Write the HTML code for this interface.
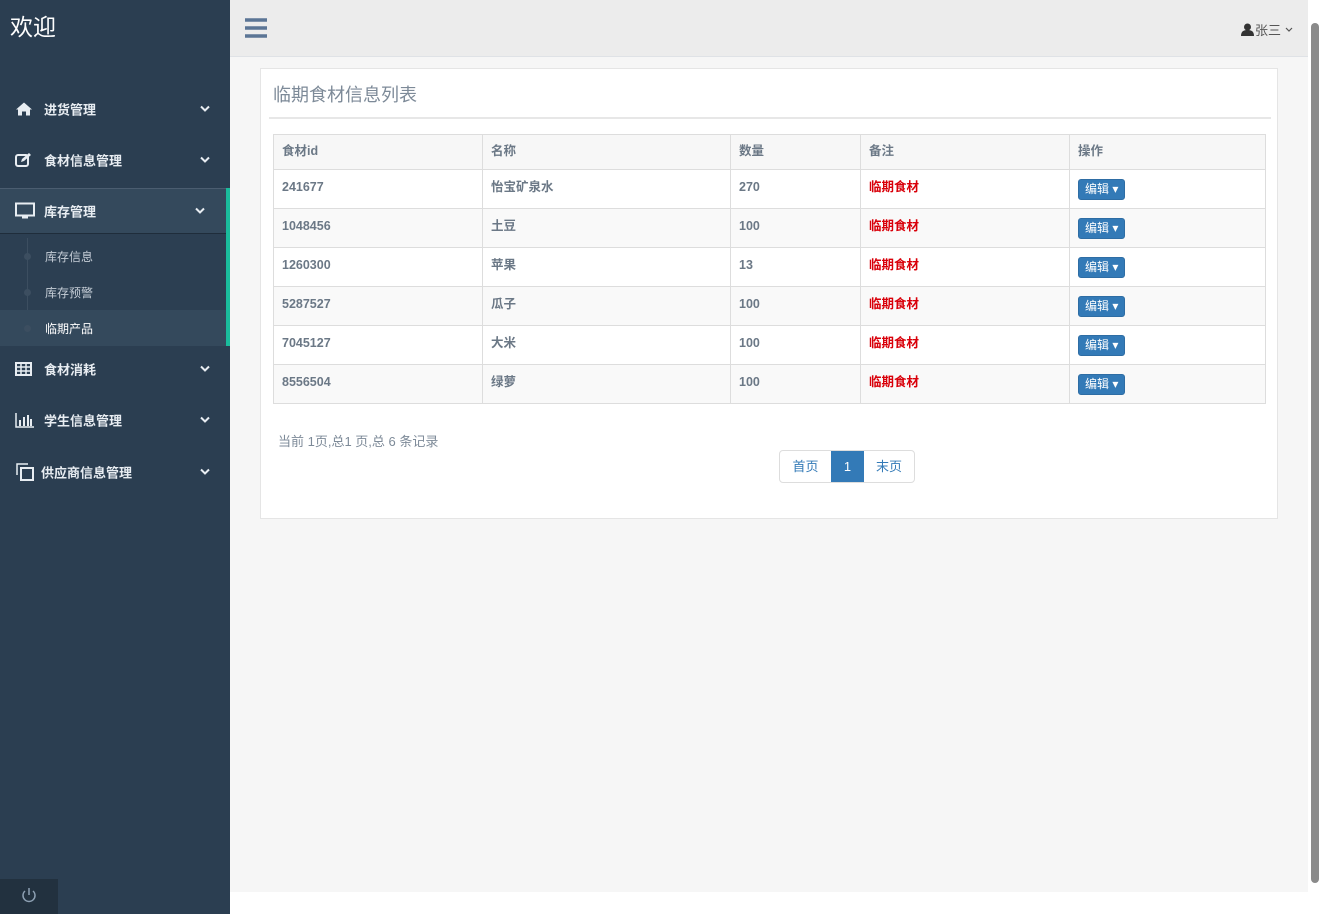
<!DOCTYPE html>
<html><head><meta charset="utf-8"><style>
*{box-sizing:border-box;margin:0;padding:0}
body{width:1323px;height:914px;overflow:hidden;font-family:"Liberation Sans","Noto Sans CJK SC",sans-serif;background:#f6f6f6;position:relative;font-size:13px}
.side{position:absolute;left:0;top:0;width:230px;height:914px;background:#2b3e51;color:#e8edf2}
.logo{position:absolute;left:10px;top:11px;font-size:23px;color:#fff;line-height:32px}
.item{position:absolute;left:0;width:230px;height:50px;font-size:13px;font-weight:bold}
.item .ic{position:absolute;left:15px;top:50%;transform:translateY(-50%)}
.item .t{position:absolute;left:44px;top:50%;transform:translateY(-50%)}
.item .ch{position:absolute;right:20px;top:50%;transform:translateY(-50%)}
.sub{position:absolute;left:0;width:226px;height:36px;font-size:12px;color:#c5cdd6}
.sub span{position:absolute;left:45px;top:10px}
.dot{position:absolute;left:24px;top:15px;width:7px;height:7px;border-radius:50%;background:#3c4e60}
.top{position:absolute;left:230px;top:0;width:1078px;height:57px;background:#ececec;border-bottom:1px solid #dfe2e6}
.panel{position:absolute;left:260px;top:68px;width:1018px;height:451px;background:#fff;border:1px solid #e5e5e5}
table{position:absolute;left:12px;top:65px;border-collapse:collapse;width:993px;color:#6b7886;font-weight:bold;font-size:12.5px}
td{border:1px solid #ddd;height:39px;padding:0 8px;vertical-align:top;padding-top:9px;line-height:16px}
tr.h td{height:35px;background:#f7f7f7;padding-top:8px}
tr.g td{background:#f9f9f9}
.red{color:#d9000a}
.btn{display:inline-block;background:#337ab7;color:#fff;font-size:12px;padding:1px 6px;border-radius:3px;border:1px solid #2e6da4;font-weight:normal;line-height:17px}
.pg{position:absolute;top:381px;left:518px;display:flex;border:1px solid #ddd;border-radius:4px;height:33px;font-size:13px;color:#337ab7}
.pg div{width:41px;line-height:31px;text-align:center}
</style></head><body>
<svg width="0" height="0" style="position:absolute"><defs><symbol id="chv" viewBox="0 0 10 7"><path d="M1 1l4 4 4-4" fill="none" stroke="#e8edf2" stroke-width="2"/></symbol></defs></svg>
<div class="side">
<div class="logo">欢迎</div>
<div class="item" style="top:84px"><svg class="ic" width="18" height="15" viewBox="0 0 18 15"><path d="M9 1L1 8h2v6h4v-4h4v4h4V8h2z" fill="#e8edf2"/></svg><span class="t">进货管理</span><svg class="ch" width="10" height="7"><use href="#chv"/></svg></div>
<div class="item" style="top:135px"><svg class="ic" width="18" height="16"><rect x="1" y="3" width="12" height="11" fill="none" stroke="#e8edf2" stroke-width="2" rx="2"/><path d="M6 10l1-3 7-6 2 2-7 6z" fill="#e8edf2"/></svg><span class="t">食材信息管理</span><svg class="ch" width="10" height="7"><use href="#chv"/></svg></div>
<div style="position:absolute;left:0;top:188px;width:230px;height:158px;background:#2c3f52"></div>
<div style="position:absolute;left:0;top:188px;width:226px;height:46px;background:#34495c;border-top:1px solid #4b5d70;border-bottom:1px solid #1f2d3b"></div>
<div style="position:absolute;left:226px;top:188px;width:4px;height:158px;background:#1abc9c"></div>
<div class="item" style="top:186px"><svg class="ic" width="20" height="17"><rect x="1" y="1" width="18" height="12" fill="none" stroke="#e8edf2" stroke-width="2"/><rect x="7" y="13" width="6" height="3" fill="#e8edf2"/></svg><span class="t">库存管理</span><svg class="ch" width="10" height="7" style="right:25px"><use href="#chv"/></svg></div>
<div style="position:absolute;left:27px;top:238px;width:1px;height:108px;background:#3c4e60"></div>
<div class="sub" style="top:238px"><i class="dot"></i><span>库存信息</span></div>
<div class="sub" style="top:274px"><i class="dot"></i><span>库存预警</span></div>
<div class="sub" style="top:310px;background:#34495c;color:#fff"><i class="dot"></i><span>临期产品</span></div>
<div class="item" style="top:344px"><svg class="ic" width="17" height="14"><rect x="1" y="1" width="15" height="12" fill="none" stroke="#e8edf2" stroke-width="2"/><path d="M1 5h15M1 9h15M6 1v12M11 1v12" stroke="#e8edf2" stroke-width="1.5"/></svg><span class="t">食材消耗</span><svg class="ch" width="10" height="7"><use href="#chv"/></svg></div>
<div class="item" style="top:395px"><svg class="ic" width="20" height="16"><path d="M1 1v14h18" stroke="#e8edf2" stroke-width="1.5" fill="none"/><rect x="4" y="8" width="2" height="6" fill="#e8edf2"/><rect x="8" y="5" width="2" height="9" fill="#e8edf2"/><rect x="12" y="3" width="2" height="11" fill="#e8edf2"/><rect x="15" y="7" width="2" height="7" fill="#e8edf2"/></svg><span class="t">学生信息管理</span><svg class="ch" width="10" height="7"><use href="#chv"/></svg></div>
<div class="item" style="top:447px"><svg class="ic" width="20" height="20"><path d="M2 13V2h11" fill="none" stroke="#e8edf2" stroke-width="1.5"/><rect x="6" y="6" width="12" height="12" fill="none" stroke="#e8edf2" stroke-width="2"/></svg><span class="t" style="left:41px">供应商信息管理</span><svg class="ch" width="10" height="7"><use href="#chv"/></svg></div>
<div style="position:absolute;left:0;top:879px;width:58px;height:35px;background:#22313f;text-align:center;padding-top:7px"><svg width="18" height="18"><path d="M5 5a6 6 0 1 0 8 0M9 2v7" fill="none" stroke="#8da0b3" stroke-width="1.5"/></svg></div>
</div>
<div class="top">
<svg style="position:absolute;left:15px;top:18px" width="22" height="20"><path d="M0 2h22M0 10h22M0 18h22" stroke="#5b7595" stroke-width="3.5"/></svg>
<div style="position:absolute;right:15px;top:20px;font-size:13px;color:#555;display:flex;align-items:center;gap:1px"><svg width="13" height="13"><circle cx="6.5" cy="4" r="3.5" fill="#333"/><path d="M0 13c0-5 3-6 6.5-6s6.5 1 6.5 6z" fill="#333"/></svg><span>张三</span><svg width="8" height="6" style="margin-left:3px"><path d="M1 1l3 3 3-3" fill="none" stroke="#555" stroke-width="1.2"/></svg></div>
</div>
<div style="position:absolute;left:230px;top:892px;width:1078px;height:22px;background:#fff"></div>
<div style="position:absolute;left:1308px;top:0;width:15px;height:914px;background:#fff"><div style="position:absolute;left:3px;top:23px;width:8px;height:860px;background:#8a8a8a;border-radius:4px"></div></div>
<div class="panel">
<div style="position:absolute;left:12px;top:12px;font-size:18px;color:#7d8a98">临期食材信息列表</div>
<div style="position:absolute;left:8px;top:48px;width:1002px;height:2px;background:#e7e7e7"></div>
<table>
<colgroup><col style="width:209px"><col style="width:248px"><col style="width:130px"><col style="width:209px"><col></colgroup>
<tr class="h"><td>食材id</td><td>名称</td><td>数量</td><td>备注</td><td>操作</td></tr>
<tr><td>241677</td><td>怡宝矿泉水</td><td>270</td><td class="red">临期食材</td><td><span class="btn">编辑 ▾</span></td></tr>
<tr class="g"><td>1048456</td><td>土豆</td><td>100</td><td class="red">临期食材</td><td><span class="btn">编辑 ▾</span></td></tr>
<tr><td>1260300</td><td>苹果</td><td>13</td><td class="red">临期食材</td><td><span class="btn">编辑 ▾</span></td></tr>
<tr class="g"><td>5287527</td><td>瓜子</td><td>100</td><td class="red">临期食材</td><td><span class="btn">编辑 ▾</span></td></tr>
<tr><td>7045127</td><td>大米</td><td>100</td><td class="red">临期食材</td><td><span class="btn">编辑 ▾</span></td></tr>
<tr class="g"><td>8556504</td><td>绿萝</td><td>100</td><td class="red">临期食材</td><td><span class="btn">编辑 ▾</span></td></tr>
</table>
<div style="position:absolute;left:17px;top:362px;color:#7d8a98;font-size:13px">当前 1页,总1 页,总 6 条记录</div>
<div class="pg"><div style="width:51px">首页</div><div style="background:#337ab7;color:#fff;width:33px">1</div><div style="width:50px">末页</div></div>
</div>
</body></html>
